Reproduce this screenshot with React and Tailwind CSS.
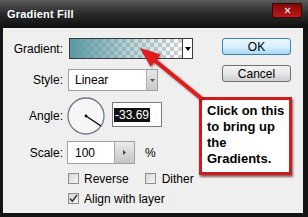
import React from "react";

const font = { fontFamily: '"Liberation Sans", Arial, sans-serif' };

const Check = ({ checked }) => (
  <div className="w-[11px] h-[11px] border border-[#8e8f8f] bg-linear-to-br from-[#d6d6d6] to-[#f7f7f7] flex items-center justify-center">
    {checked && (
      <svg width="9" height="9" viewBox="0 0 9 9">
        <path d="M1 4.5 L3.3 7.2 L8 1" fill="none" stroke="#3a3a3a" strokeWidth="1.6" />
      </svg>
    )}
  </div>
);

const Label = ({ children }) => (
  <span className="w-[60px] text-right text-[12px] text-black shrink-0">{children}</span>
);

export default function App() {
  return (
    <div className="w-[308px] h-[217px] bg-[#141414] relative overflow-hidden" style={font}>
      {/* title bar */}
      <div className="h-[28px] relative bg-linear-to-b from-[#5a5a5a] via-[#2a2a2a] to-[#0f0f0f] flex items-center pl-[7px]">
        <span className="text-white font-bold text-[11px] tracking-[0.2px]">Gradient Fill</span>
        <div className="absolute right-[6px] top-[3px] w-[30px] h-[15px] rounded-b-[3px] bg-linear-to-b from-[#7a0c0c] via-[#a30f0f] to-[#c21a1a] border border-[#3a0505] flex items-center justify-center">
          <svg width="7" height="7" viewBox="0 0 7 7">
            <path d="M1 1 L6 6 M6 1 L1 6" stroke="#f4dcdc" strokeWidth="1.4" />
          </svg>
        </div>
      </div>

      {/* body */}
      <div className="ml-[3px] w-[300px] h-[185px] bg-[#efefef] flex">
        <div className="w-[219px] flex flex-col">
          <div className="mt-[10px] h-[21px] flex items-center">
            <Label>Gradient:</Label>
            <div className="ml-[6px] w-[124px] h-[21px] border border-[#3a3a3a] flex">
              <div className="relative flex-1 [background-image:conic-gradient(#cfcfcf_25%,#ffffff_0_50%,#cfcfcf_0_75%,#ffffff_0)] [background-size:8px_8px]">
                <div className="absolute inset-0 bg-linear-to-r from-[#5898a3] via-[#5898a3]/45 to-[#5898a3]/0" />
              </div>
              <div className="w-[10px] border-l border-[#3a3a3a] bg-white flex items-center justify-center">
                <svg width="6" height="4" viewBox="0 0 6 4">
                  <path d="M0 0 L6 0 L3 4 Z" fill="#000" />
                </svg>
              </div>
            </div>
          </div>

          <div className="mt-[10px] h-[22px] flex items-center">
            <Label>Style:</Label>
            <div className="ml-[5px] w-[90px] h-[22px] border border-[#a0a0a0] bg-white flex items-center">
              <span className="flex-1 pl-[6px] text-[12px] text-black">Linear</span>
              <div className="w-[11px] h-[20px] bg-linear-to-b from-[#e8e8e8] to-[#c9c9c9] border-l border-[#b0b0b0] flex items-center justify-center">
                <svg width="5" height="3" viewBox="0 0 5 3">
                  <path d="M0 0 L5 0 L2.5 3 Z" fill="#555" />
                </svg>
              </div>
            </div>
          </div>

          <div className="mt-[6px] h-[38px] flex items-center">
            <Label>Angle:</Label>
            <svg className="ml-[4px]" width="38" height="38" viewBox="0 0 38 38">
              <circle cx="19" cy="19" r="18" fill="#f6f6f6" stroke="#6e7a8a" strokeWidth="1.3" />
              <line x1="19" y1="19" x2="34" y2="29" stroke="#000" strokeWidth="1.3" />
              <circle cx="19" cy="19" r="1.4" fill="#000" />
            </svg>
            <div className="ml-[7px] self-start mt-[5px] w-[50px] h-[25px] border border-[#7a7a7a] bg-white flex items-center pl-[1px]">
              <span className="bg-[#111] text-white text-[12px] leading-[14px] px-[1px]">-33.69</span>
            </div>
          </div>

          <div className="mt-[6px] h-[23px] flex items-center">
            <Label>Scale:</Label>
            <div className="ml-[4px] w-[68px] h-[23px] border border-[#a0a0a0] bg-white flex items-center">
              <span className="flex-1 pl-[7px] text-[12px] text-black">100</span>
              <div className="w-[20px] h-[21px] bg-linear-to-b from-[#ececec] to-[#c4c4c4] border-l border-[#a8a8a8] flex items-center justify-center">
                <svg width="3" height="5" viewBox="0 0 3 5">
                  <path d="M0 0 L3 2.5 L0 5 Z" fill="#444" />
                </svg>
              </div>
            </div>
            <span className="ml-[10px] text-[12px] text-black">%</span>
          </div>

          <div className="mt-[9px] h-[11px] flex items-center pl-[65px]">
            <Check />
            <span className="ml-[5px] text-[12px] text-black">Reverse</span>
            <div className="ml-[16px]">
              <Check />
            </div>
            <span className="ml-[6px] text-[12px] text-black">Dither</span>
          </div>

          <div className="mt-[9px] h-[11px] flex items-center pl-[65px]">
            <Check checked />
            <span className="ml-[5px] text-[12px] text-black">Align with layer</span>
          </div>
        </div>

        <div className="flex flex-col pt-[10px] gap-[10px]">
          <div className="w-[69px] h-[17px] rounded-[3px] border border-[#3c7fb1] bg-linear-to-b from-[#eaf6fd] via-[#d9f0fc] to-[#a7d9f5] flex items-center justify-center text-[12px] text-black">
            OK
          </div>
          <div className="w-[69px] h-[17px] rounded-[3px] border border-[#707070] bg-linear-to-b from-[#f4f4f4] via-[#e6e6e6] to-[#cfcfcf] flex items-center justify-center text-[12px] text-black">
            Cancel
          </div>
        </div>
      </div>

      {/* callout */}
      <div className="absolute left-[199px] top-[97px] w-[93px] h-[78px] bg-white border-[3px] border-[#cf1b1b] shadow-[1px_2px_2px_rgba(60,0,0,0.6)] pl-[5px] pt-[3px]">
        <div className="text-[13px] font-bold leading-[16px] text-black">
          Click on this
          <br />
          to bring up
          <br />
          the
          <br />
          Gradients.
        </div>
      </div>

      <svg className="absolute left-0 top-0 pointer-events-none" width="308" height="217" viewBox="0 0 308 217">
        <g style={{ filter: "drop-shadow(1px 1px 1px rgba(60,0,0,0.55))" }}>
          <line x1="153" y1="59" x2="202" y2="99" stroke="#e11b1b" strokeWidth="4" />
          <polygon points="140,48 150.5,66.5 160.5,54.5" fill="#e11b1b" />
        </g>
      </svg>
    </div>
  );
}
